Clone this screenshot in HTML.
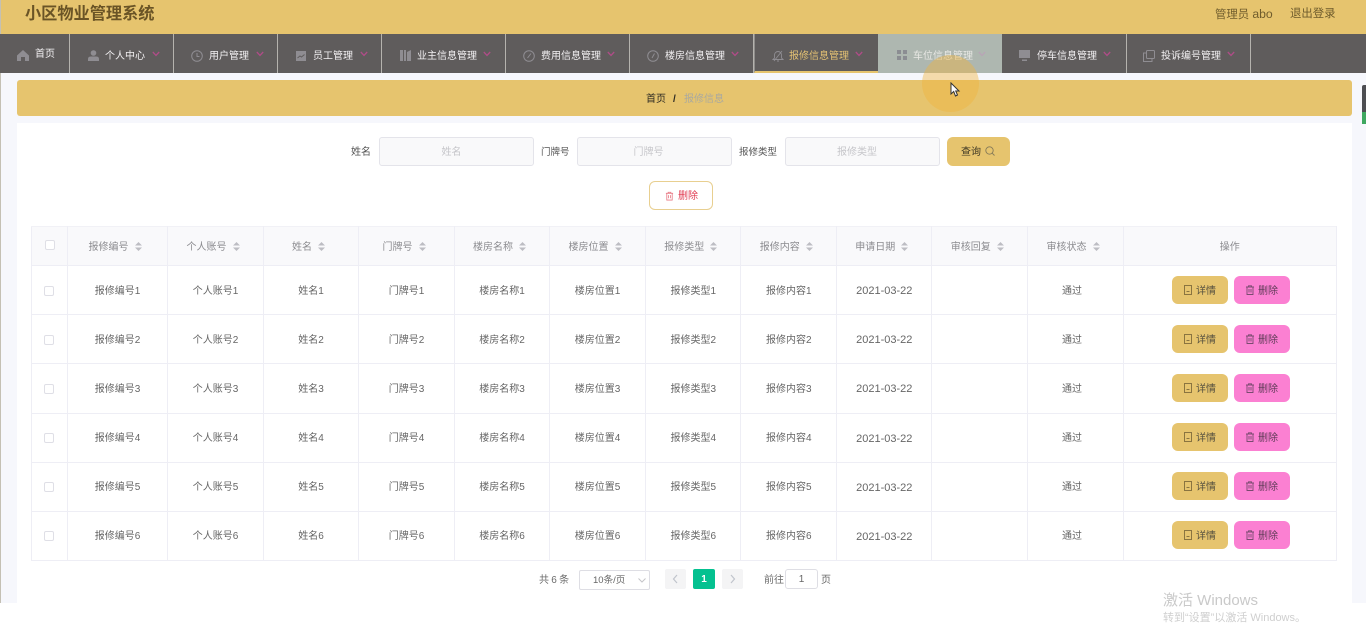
<!DOCTYPE html>
<html lang="zh-CN">
<head>
<meta charset="utf-8">
<title>小区物业管理系统</title>
<style>
*{box-sizing:border-box;margin:0;padding:0}
html,body{width:1366px;height:627px;overflow:hidden;background:#fff}
body{position:relative;font-family:"Liberation Sans","Noto Sans CJK SC",sans-serif;font-size:10px;color:#666}
#w{position:absolute;left:0;top:0;width:1366px;height:627px;filter:blur(.35px);overflow:hidden}
.a{position:absolute;white-space:nowrap}
.bg{position:absolute;left:0;top:73px;width:1366px;height:530px;background:#f6f7fc}
.hd{position:absolute;left:0;top:0;width:1366px;height:34px;background:#e6c46e}
.edge{position:absolute;left:0;top:0;width:1px;height:603px;background:#c4c0b4}
.nav{position:absolute;left:0;top:34px;width:1366px;height:39px;background:#5f5c5c}
.it{position:absolute;top:0;height:39px;border-right:1px solid #b5b3ae;color:#f2f0f2;font-size:10px;line-height:45px}
.it span{position:absolute;top:0;white-space:nowrap}
.it svg{position:absolute}
.it svg.c{top:17px;width:8px;height:6px}
.bc{position:absolute;left:17px;top:80px;width:1335px;height:36px;background:#e6c46e;border-radius:3px}
.pn{position:absolute;left:17px;top:123px;width:1335px;height:480px;background:#fff}
.ip{position:absolute;top:137px;width:155px;height:29px;background:#f9f9fa;border:1px solid #e4e4ea;border-radius:3px;text-align:center;line-height:29px;color:#c6c6ca;font-size:10px}
.lb{position:absolute;top:137px;line-height:31px;color:#555;font-size:10px;white-space:nowrap}
table{position:absolute;left:31px;top:226px;width:1306px;height:335px;border-collapse:collapse;table-layout:fixed;font-size:10px;color:#666}
th{height:39px;background:#f9f9fb;color:#8c8c90;font-weight:normal;border:1px solid #eeeef5;border-top-color:#f1f1f6;text-align:center;white-space:nowrap;padding:0 4px 2px 0}
th.n{padding:0 0 2px 0}
th.h{padding:0 0 2px 1px}
td{height:49px;border:1px solid #eeeef5;text-align:center;white-space:nowrap;padding:0 0 2px 1px}
td.dt{font-size:11px;padding:2px 0 0 1px}
td.st{padding:0 6px 2px 0}
td.ck{padding:1px 0 0 0}
th svg{margin-left:6px;vertical-align:-1px}
.cb{display:inline-block;width:10px;height:10px;border:1px solid #dfdfe6;border-radius:2px;background:#fff;vertical-align:middle}
.b{position:absolute;width:56px;height:28px;border-radius:6px;line-height:31px;text-align:left;padding-left:24px;font-size:10px;color:#55503f}
.b svg{position:absolute;left:11px;top:9px}
.d{background:#e6c46e;left:1172px}
.x{background:#fb80d2;left:1234px;color:#5d3a56}
.pg{position:absolute;top:569px;height:20px;width:21px;background:#f4f4f5;border-radius:2px}
.pg svg{position:absolute;left:7px;top:5px}
</style>
</head>
<body>
<div id="w">
<div class="bg"></div>
<div class="hd"></div>
<div class="edge"></div>
<div class="a" style="left:25px;top:4px;font-size:16.2px;font-weight:bold;line-height:20px;color:#6a5426">小区物业管理系统</div>
<div class="a" style="left:1215px;top:7px;font-size:11.4px;line-height:14px;color:#6f5c2c">管理员 <span style="font-size:12.2px">abo</span></div>
<div class="a" style="left:1290px;top:7px;font-size:11.4px;line-height:14px;color:#6f5c2c">退出登录</div>

<div class="nav">
<div class="it" style="left:0;width:70px"><svg style="left:17px;top:16px" width="12" height="11" viewBox="0 0 12 11"><path d="M6 0 12 5.500V11H8V7H4v4H0V5.500z" fill="#8f8d92"/></svg><span style="left:35px;top:-2px">首页</span></div>
<div class="it" style="left:70px;width:104px"><svg style="left:18px;top:16px" width="11" height="11" viewBox="0 0 11 11"><circle cx="5.500" cy="3" r="2.800" fill="#8f8d92"/><path d="M0 11V9q0-2.500 3-2.500h5Q11 6.500 11 9v2z" fill="#8f8d92"/></svg><span style="left:35px">个人中心</span><svg class="c" style="left:82px" viewBox="0 0 8 6"><path d="M.8 1 4 4.400 7.200 1" fill="none" stroke="#b04c88" stroke-width="1.300"/></svg></div>
<div class="it" style="left:174px;width:104px"><svg style="left:17px;top:16px" width="12" height="12" viewBox="0 0 12 12"><circle cx="6" cy="6" r="5.300" fill="none" stroke="#8f8d92"/><path d="M6 3v3.500h2.500" fill="none" stroke="#8f8d92"/></svg><span style="left:35px">用户管理</span><svg class="c" style="left:82px" viewBox="0 0 8 6"><path d="M.8 1 4 4.400 7.200 1" fill="none" stroke="#b04c88" stroke-width="1.300"/></svg></div>
<div class="it" style="left:278px;width:104px"><svg style="left:18px;top:17px" width="10" height="10" viewBox="0 0 10 10"><rect width="10" height="10" fill="#8f8d92"/><path d="M1.500 7 4 5l1.500 1L8.500 3.500" fill="none" stroke="#5f5c5c"/></svg><span style="left:35px">员工管理</span><svg class="c" style="left:82px" viewBox="0 0 8 6"><path d="M.8 1 4 4.400 7.200 1" fill="none" stroke="#b04c88" stroke-width="1.300"/></svg></div>
<div class="it" style="left:382px;width:124px"><svg style="left:18px;top:16px" width="11" height="11" viewBox="0 0 11 11"><path d="M0 0h3v11H0zM4 0h2v11H4zM7 2l4-2v11H7z" fill="#8f8d92"/></svg><span style="left:35px">业主信息管理</span><svg class="c" style="left:101px" viewBox="0 0 8 6"><path d="M.8 1 4 4.400 7.200 1" fill="none" stroke="#b04c88" stroke-width="1.300"/></svg></div>
<div class="it" style="left:506px;width:124px"><svg style="left:17px;top:16px" width="12" height="12" viewBox="0 0 12 12"><circle cx="6" cy="6" r="5.300" fill="none" stroke="#8f8d92"/><path d="M4.500 8 8 3.500" fill="none" stroke="#8f8d92"/></svg><span style="left:35px">费用信息管理</span><svg class="c" style="left:101px" viewBox="0 0 8 6"><path d="M.8 1 4 4.400 7.200 1" fill="none" stroke="#b04c88" stroke-width="1.300"/></svg></div>
<div class="it" style="left:630px;width:124px"><svg style="left:17px;top:16px" width="12" height="12" viewBox="0 0 12 12"><circle cx="6" cy="6" r="5.300" fill="none" stroke="#8f8d92"/><path d="M5 8 7.500 3.500" fill="none" stroke="#8f8d92"/></svg><span style="left:35px">楼房信息管理</span><svg class="c" style="left:101px" viewBox="0 0 8 6"><path d="M.8 1 4 4.400 7.200 1" fill="none" stroke="#b04c88" stroke-width="1.300"/></svg></div>
<div class="it" style="left:754px;width:124px;color:#e3c173;border-bottom:2px solid #e6c46e;border-right:0;border-left:1px solid #8f8d8b"><svg style="left:17px;top:16px" width="12" height="12" viewBox="0 0 12 12"><path d="M1 9.500h10L9.500 8V5a3.500 3.500 0 0 0-7 0v3zM5 11h2M2 11 10 1" fill="none" stroke="#8f8d92" stroke-width=".9"/></svg><span style="left:34px">报修信息管理</span><svg class="c" style="left:100px" viewBox="0 0 8 6"><path d="M.8 1 4 4.400 7.200 1" fill="none" stroke="#b04c88" stroke-width="1.300"/></svg></div>
<div class="it" style="left:878px;width:124px;background:#aeb7b0;border-right:1px solid #aeb7b0;color:#e8e8e4"><svg style="left:19px;top:16px" width="10" height="10" viewBox="0 0 10 10"><path d="M0 0h4v4H0zM6 0h4v4H6zM0 6h4v4H0zM6 6h4v4H6z" fill="#8b8d92"/></svg><span style="left:35px">车位信息管理</span><svg class="c" style="left:100px" viewBox="0 0 8 6"><path d="M.8 1 4 4.400 7.200 1" fill="none" stroke="#b8a5b6" stroke-width="1.300"/></svg></div>
<div class="it" style="left:1002px;width:125px"><svg style="left:17px;top:16px" width="11" height="11" viewBox="0 0 11 11"><path d="M0 0h11v8H0zM3 9.500h5V11H3z" fill="#8f8d92"/></svg><span style="left:35px">停车信息管理</span><svg class="c" style="left:101px" viewBox="0 0 8 6"><path d="M.8 1 4 4.400 7.200 1" fill="none" stroke="#b04c88" stroke-width="1.300"/></svg></div>
<div class="it" style="left:1127px;width:124px"><svg style="left:16px;top:16px" width="12" height="12" viewBox="0 0 12 12"><rect x="3.500" y=".5" width="8" height="8" rx="1" fill="none" stroke="#8f8d92"/><path d="M3 3H.5v8.500H9V9" fill="none" stroke="#8f8d92"/></svg><span style="left:34px">投诉编号管理</span><svg class="c" style="left:100px" viewBox="0 0 8 6"><path d="M.8 1 4 4.400 7.200 1" fill="none" stroke="#b04c88" stroke-width="1.300"/></svg></div>
</div>

<div class="bc"></div>
<div class="a" style="left:646px;top:93px;line-height:14px;color:#2d2a22">首页</div>
<div class="a" style="left:673px;top:93px;line-height:14px;color:#2d2a22;font-weight:bold">/</div>
<div class="a" style="left:684px;top:93px;line-height:14px;color:#aaa99f">报修信息</div>
<div class="a" style="left:1362px;top:85px;width:4px;height:39px;background:#4d4e52;border-radius:2px 0 0 2px"></div>
<div class="a" style="left:1362px;top:112px;width:4px;height:12px;background:#3fa860"></div>

<div class="pn"></div>
<div class="lb" style="left:351px">姓名</div>
<div class="ip" style="left:379px;padding-right:10px">姓名</div>
<div class="lb" style="left:541px;font-size:9.500px">门牌号</div>
<div class="ip" style="left:577px;padding-right:12px">门牌号</div>
<div class="lb" style="left:739px;font-size:9.500px">报修类型</div>
<div class="ip" style="left:785px;padding-right:11px">报修类型</div>
<div class="a" style="left:947px;top:137px;width:63px;height:29px;background:#e6c46e;border-radius:6px;line-height:31px;padding-left:14px;color:#3d3724">查询<svg style="position:absolute;left:38px;top:9px" width="10" height="10" viewBox="0 0 10 10"><circle cx="4.500" cy="4.500" r="3.700" fill="none" stroke="#857a58" stroke-width=".9"/><path d="M7.200 7.200 9.500 9.500" stroke="#857a58" stroke-width=".9"/></svg></div>
<div class="a" style="left:649px;top:181px;width:64px;height:29px;background:#fff;border:1px solid #e8cf90;border-radius:6px;line-height:29px;padding-left:28px;color:#e0384f"><svg style="position:absolute;left:15px;top:9px" width="9" height="10" viewBox="0 0 10 10"><path d="M1 2h8M3.500 2V.8h3V2M2 2v7.500h6V2M4 4v3.500M6 4v3.500" fill="none" stroke="#e87a85" stroke-width=".9"/></svg>删除</div>

<table>
<colgroup><col style="width:35.500px"><col style="width:100px"><col style="width:96px"><col style="width:95px"><col style="width:96px"><col style="width:95px"><col style="width:96px"><col style="width:95.500px"><col style="width:95.500px"><col style="width:95.500px"><col style="width:95.500px"><col style="width:96px"><col></colgroup>
<tr>
<th class="h"><span class="cb"></span></th>
<th>报修编号<svg width="7" height="9" viewBox="0 0 7 9"><path d="M3.500 0 7 3.500H0zM3.500 9 0 5.500h7z" fill="#bdbdc3"/></svg></th>
<th>个人账号<svg width="7" height="9" viewBox="0 0 7 9"><path d="M3.500 0 7 3.500H0zM3.500 9 0 5.500h7z" fill="#bdbdc3"/></svg></th>
<th>姓名<svg width="7" height="9" viewBox="0 0 7 9"><path d="M3.500 0 7 3.500H0zM3.500 9 0 5.500h7z" fill="#bdbdc3"/></svg></th>
<th>门牌号<svg width="7" height="9" viewBox="0 0 7 9"><path d="M3.500 0 7 3.500H0zM3.500 9 0 5.500h7z" fill="#bdbdc3"/></svg></th>
<th>楼房名称<svg width="7" height="9" viewBox="0 0 7 9"><path d="M3.500 0 7 3.500H0zM3.500 9 0 5.500h7z" fill="#bdbdc3"/></svg></th>
<th>楼房位置<svg width="7" height="9" viewBox="0 0 7 9"><path d="M3.500 0 7 3.500H0zM3.500 9 0 5.500h7z" fill="#bdbdc3"/></svg></th>
<th>报修类型<svg width="7" height="9" viewBox="0 0 7 9"><path d="M3.500 0 7 3.500H0zM3.500 9 0 5.500h7z" fill="#bdbdc3"/></svg></th>
<th>报修内容<svg width="7" height="9" viewBox="0 0 7 9"><path d="M3.500 0 7 3.500H0zM3.500 9 0 5.500h7z" fill="#bdbdc3"/></svg></th>
<th>申请日期<svg width="7" height="9" viewBox="0 0 7 9"><path d="M3.500 0 7 3.500H0zM3.500 9 0 5.500h7z" fill="#bdbdc3"/></svg></th>
<th>审核回复<svg width="7" height="9" viewBox="0 0 7 9"><path d="M3.500 0 7 3.500H0zM3.500 9 0 5.500h7z" fill="#bdbdc3"/></svg></th>
<th>审核状态<svg width="7" height="9" viewBox="0 0 7 9"><path d="M3.500 0 7 3.500H0zM3.500 9 0 5.500h7z" fill="#bdbdc3"/></svg></th>
<th class="n">操作</th>
</tr>
<tr><td class="ck"><span class="cb"></span></td><td>报修编号1</td><td>个人账号1</td><td>姓名1</td><td>门牌号1</td><td>楼房名称1</td><td>楼房位置1</td><td>报修类型1</td><td>报修内容1</td><td class="dt">2021-03-22</td><td></td><td class="st">通过</td><td></td></tr>
<tr><td class="ck"><span class="cb"></span></td><td>报修编号2</td><td>个人账号2</td><td>姓名2</td><td>门牌号2</td><td>楼房名称2</td><td>楼房位置2</td><td>报修类型2</td><td>报修内容2</td><td class="dt">2021-03-22</td><td></td><td class="st">通过</td><td></td></tr>
<tr><td class="ck"><span class="cb"></span></td><td>报修编号3</td><td>个人账号3</td><td>姓名3</td><td>门牌号3</td><td>楼房名称3</td><td>楼房位置3</td><td>报修类型3</td><td>报修内容3</td><td class="dt">2021-03-22</td><td></td><td class="st">通过</td><td></td></tr>
<tr><td class="ck"><span class="cb"></span></td><td>报修编号4</td><td>个人账号4</td><td>姓名4</td><td>门牌号4</td><td>楼房名称4</td><td>楼房位置4</td><td>报修类型4</td><td>报修内容4</td><td class="dt">2021-03-22</td><td></td><td class="st">通过</td><td></td></tr>
<tr><td class="ck"><span class="cb"></span></td><td>报修编号5</td><td>个人账号5</td><td>姓名5</td><td>门牌号5</td><td>楼房名称5</td><td>楼房位置5</td><td>报修类型5</td><td>报修内容5</td><td class="dt">2021-03-22</td><td></td><td class="st">通过</td><td></td></tr>
<tr><td class="ck"><span class="cb"></span></td><td>报修编号6</td><td>个人账号6</td><td>姓名6</td><td>门牌号6</td><td>楼房名称6</td><td>楼房位置6</td><td>报修类型6</td><td>报修内容6</td><td class="dt">2021-03-22</td><td></td><td class="st">通过</td><td></td></tr>
</table>

<div class="b d" style="top:276px"><svg width="10" height="10" viewBox="0 0 10 10"><path d="M1.500.5h7v9h-7zM3.500 6.500h3" fill="none" stroke="#8a7440"/></svg>详情</div>
<div class="b x" style="top:276px"><svg width="10" height="10" viewBox="0 0 10 10"><path d="M1 2h8M3.500 2V.8h3V2M2 2v7.500h6V2M4 4v3.500M6 4v3.500" fill="none" stroke="#7a4a70" stroke-width=".9"/></svg>删除</div>
<div class="b d" style="top:325px"><svg width="10" height="10" viewBox="0 0 10 10"><path d="M1.500.5h7v9h-7zM3.500 6.500h3" fill="none" stroke="#8a7440"/></svg>详情</div>
<div class="b x" style="top:325px"><svg width="10" height="10" viewBox="0 0 10 10"><path d="M1 2h8M3.500 2V.8h3V2M2 2v7.500h6V2M4 4v3.500M6 4v3.500" fill="none" stroke="#7a4a70" stroke-width=".9"/></svg>删除</div>
<div class="b d" style="top:374px"><svg width="10" height="10" viewBox="0 0 10 10"><path d="M1.500.5h7v9h-7zM3.500 6.500h3" fill="none" stroke="#8a7440"/></svg>详情</div>
<div class="b x" style="top:374px"><svg width="10" height="10" viewBox="0 0 10 10"><path d="M1 2h8M3.500 2V.8h3V2M2 2v7.500h6V2M4 4v3.500M6 4v3.500" fill="none" stroke="#7a4a70" stroke-width=".9"/></svg>删除</div>
<div class="b d" style="top:423px"><svg width="10" height="10" viewBox="0 0 10 10"><path d="M1.500.5h7v9h-7zM3.500 6.500h3" fill="none" stroke="#8a7440"/></svg>详情</div>
<div class="b x" style="top:423px"><svg width="10" height="10" viewBox="0 0 10 10"><path d="M1 2h8M3.500 2V.8h3V2M2 2v7.500h6V2M4 4v3.500M6 4v3.500" fill="none" stroke="#7a4a70" stroke-width=".9"/></svg>删除</div>
<div class="b d" style="top:472px"><svg width="10" height="10" viewBox="0 0 10 10"><path d="M1.500.5h7v9h-7zM3.500 6.500h3" fill="none" stroke="#8a7440"/></svg>详情</div>
<div class="b x" style="top:472px"><svg width="10" height="10" viewBox="0 0 10 10"><path d="M1 2h8M3.500 2V.8h3V2M2 2v7.500h6V2M4 4v3.500M6 4v3.500" fill="none" stroke="#7a4a70" stroke-width=".9"/></svg>删除</div>
<div class="b d" style="top:521px"><svg width="10" height="10" viewBox="0 0 10 10"><path d="M1.500.5h7v9h-7zM3.500 6.500h3" fill="none" stroke="#8a7440"/></svg>详情</div>
<div class="b x" style="top:521px"><svg width="10" height="10" viewBox="0 0 10 10"><path d="M1 2h8M3.500 2V.8h3V2M2 2v7.500h6V2M4 4v3.500M6 4v3.500" fill="none" stroke="#7a4a70" stroke-width=".9"/></svg>删除</div>

<div class="a" style="left:539px;top:574px;line-height:13px;color:#6b6b6b;word-spacing:-.5px">共 6 条</div>
<div class="a" style="left:579px;top:570px;width:71px;height:20px;border:1px solid #dedee4;border-radius:2px;line-height:20px;padding-left:13px;color:#666;font-size:9.500px">10条/页<svg style="position:absolute;left:58px;top:7px" width="8" height="5" viewBox="0 0 8 5"><path d="M.5.500 4 4 7.500.5" fill="none" stroke="#c4c4c8"/></svg></div>
<div class="pg" style="left:665px"><svg width="7" height="10" viewBox="0 0 7 10"><path d="M5 1 1.500 5 5 9" fill="none" stroke="#c0c4cc" stroke-width="1.200"/></svg></div>
<div class="a" style="left:693px;top:569px;width:22px;height:20px;background:#04c190;border-radius:2px;color:#fff;font-weight:bold;text-align:center;line-height:21px">1</div>
<div class="pg" style="left:722px"><svg width="7" height="10" viewBox="0 0 7 10"><path d="M2 1 5.500 5 2 9" fill="none" stroke="#c0c4cc" stroke-width="1.200"/></svg></div>
<div class="a" style="left:764px;top:574px;line-height:13px;color:#6b6b6b">前往</div>
<div class="a" style="left:785px;top:569px;width:33px;height:20px;border:1px solid #dedee4;border-radius:3px;text-align:center;line-height:20px;color:#666">1</div>
<div class="a" style="left:821px;top:574px;line-height:13px;color:#6b6b6b">页</div>

<div class="a" style="left:922px;top:55px;width:57px;height:57px;border-radius:50%;background:rgba(240,178,60,.42)"></div>
<svg class="a" style="left:950px;top:82px" width="11" height="15" viewBox="0 0 11 15"><path d="M1 1v11l2.700-2.500L5.500 14l2-1-1.800-4H9z" fill="#fff" stroke="#333" stroke-width="1"/></svg>

<div class="a" style="left:1163px;top:592px;font-size:15px;line-height:18px;color:#c9c9c9">激活 Windows</div>
<div class="a" style="left:1163px;top:611px;font-size:11px;line-height:14px;color:#cfcfcf">转到“设置”以激活 Windows。</div>
</div>
</body>
</html>
